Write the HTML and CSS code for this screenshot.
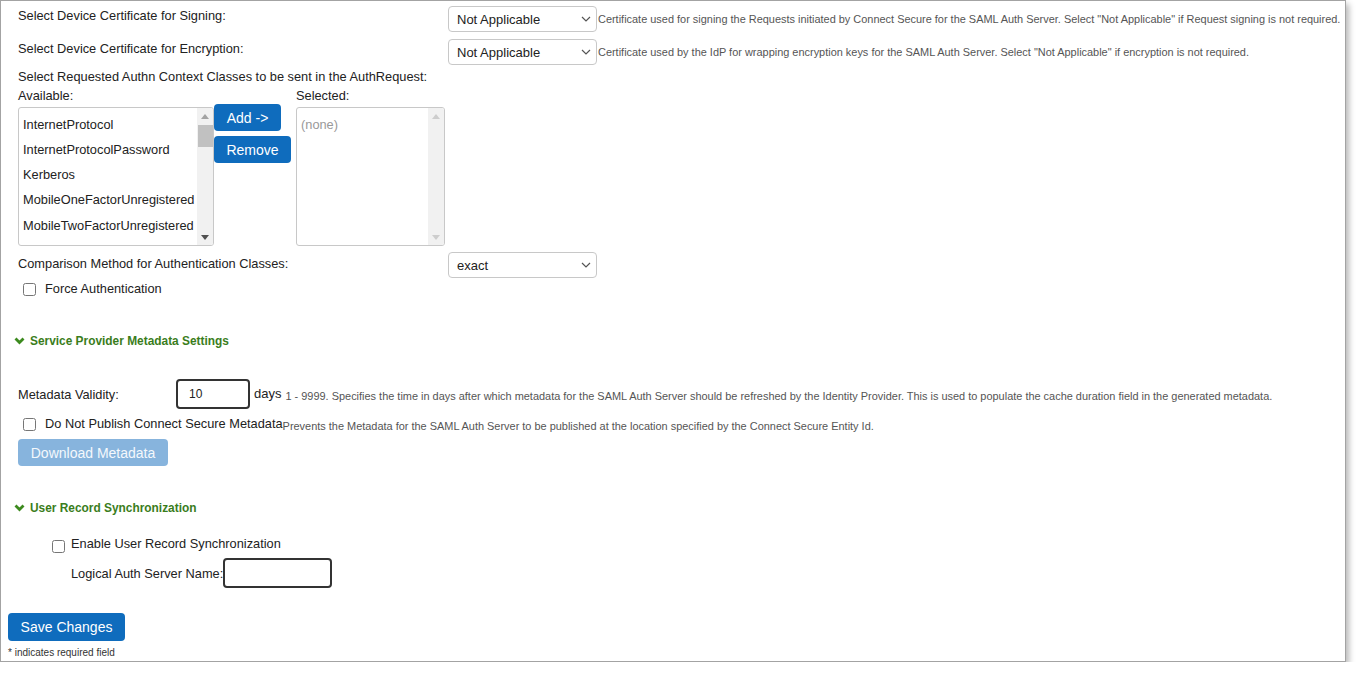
FILE: index.html
```html
<!DOCTYPE html>
<html>
<head>
<meta charset="utf-8">
<link rel="stylesheet" href="styles.css">
</head>
<body>
<div class="frame">
  <div class="content">
    <div class="row r1">
      <div class="label">Select Device Certificate for Signing:</div>
      <div class="field">
        <div class="select"><span>Not Applicable</span><svg width="10" height="6" viewBox="0 0 10 6"><path d="M1 1l4 4 4-4" fill="none" stroke="#555" stroke-width="1.2"/></svg></div>
        <span class="help">Certificate used for signing the Requests initiated by Connect Secure for the SAML Auth Server. Select "Not Applicable" if Request signing is not required.</span>
      </div>
    </div>
    <div class="row r2">
      <div class="label">Select Device Certificate for Encryption:</div>
      <div class="field">
        <div class="select"><span>Not Applicable</span><svg width="10" height="6" viewBox="0 0 10 6"><path d="M1 1l4 4 4-4" fill="none" stroke="#555" stroke-width="1.2"/></svg></div>
        <span class="help">Certificate used by the IdP for wrapping encryption keys for the SAML Auth Server. Select "Not Applicable" if encryption is not required.</span>
      </div>
    </div>
    <div class="plain r3">Select Requested Authn Context Classes to be sent in the AuthRequest:</div>
    <div class="lists">
      <div class="plain">Available:</div>
      <div></div>
      <div class="plain">Selected:</div>
      <div class="listbox">
        <ul class="items">
          <li>InternetProtocol</li>
          <li>InternetProtocolPassword</li>
          <li>Kerberos</li>
          <li>MobileOneFactorUnregistered</li>
          <li>MobileTwoFactorUnregistered</li>
        </ul>
        <div class="sbar">
          <svg class="arr up" width="8" height="5" viewBox="0 0 8 5"><path d="M0 5L4 0L8 5Z" fill="#a3a3a3"/></svg>
          <div class="thumb"></div>
          <svg class="arr down" width="8" height="5" viewBox="0 0 8 5"><path d="M0 0L4 5L8 0Z" fill="#505050"/></svg>
        </div>
      </div>
      <div class="btns">
        <button class="btn">Add -&gt;</button>
        <button class="btn">Remove</button>
      </div>
      <div class="listbox sel">
        <ul class="items"><li class="none">(none)</li></ul>
        <div class="sbar">
          <svg class="arr up" width="8" height="5" viewBox="0 0 8 5"><path d="M0 5L4 0L8 5Z" fill="#cdcdcd"/></svg>
          <div class="spacer"></div>
          <svg class="arr down" width="8" height="5" viewBox="0 0 8 5"><path d="M0 0L4 5L8 0Z" fill="#cdcdcd"/></svg>
        </div>
      </div>
    </div>
    <div class="row r4">
      <div class="label mid">Comparison Method for Authentication Classes:</div>
      <div class="field">
        <div class="select"><span>exact</span><svg width="10" height="6" viewBox="0 0 10 6"><path d="M1 1l4 4 4-4" fill="none" stroke="#555" stroke-width="1.2"/></svg></div>
      </div>
    </div>
    <label class="check r5"><input type="checkbox"><span>Force Authentication</span></label>

    <div class="section s1"><svg width="11" height="8" viewBox="0 0 11 8"><path d="M1.5 1.5l4 4 4-4" fill="none" stroke="#3c8a1e" stroke-width="2.8"/></svg><span>Service Provider Metadata Settings</span></div>

    <div class="meta">
      <div class="mlabel">Metadata Validity:</div>
      <input class="tin small" type="text" value="10">
      <span class="days">days</span>
      <span class="help">1 - 9999. Specifies the time in days after which metadata for the SAML Auth Server should be refreshed by the Identity Provider. This is used to populate the cache duration field in the generated metadata.</span>
    </div>
    <div class="pub">
      <label class="check"><input type="checkbox"><span>Do Not Publish Connect Secure Metadata</span></label>
      <span class="help">Prevents the Metadata for the SAML Auth Server to be published at the location specified by the Connect Secure Entity Id.</span>
    </div>
    <button class="btn dl">Download Metadata</button>

    <div class="section s2"><svg width="11" height="8" viewBox="0 0 11 8"><path d="M1.5 1.5l4 4 4-4" fill="none" stroke="#3c8a1e" stroke-width="2.8"/></svg><span>User Record Synchronization</span></div>

    <div class="sync">
      <label class="check en"><input type="checkbox"><span>Enable User Record Synchronization</span></label>
      <div class="logical"><span>Logical Auth Server Name:</span><input class="tin wide" type="text" value=""></div>
    </div>
  </div>
  <div class="footer">
    <button class="btn save">Save Changes</button>
    <div class="req">* indicates required field</div>
  </div>
</div>
</body>
</html>
```

FILE: styles.css
```css
html, body {
  margin: 0;
  padding: 0;
  background: #ffffff;
}
body {
  font-family: "Liberation Sans", Arial, sans-serif;
  color: #222;
  font-size: 12.8px;
}
.frame {
  box-sizing: border-box;
  width: 1346px;
  height: 662px;
  border: 1px solid #a3a3a3;
  background: #fff;
  box-shadow: 3px 4px 6px rgba(0, 0, 0, 0.28);
  display: flex;
  flex-direction: column;
}
.content {
  padding: 5px 0 0 17px;
}
.row {
  display: flex;
  align-items: flex-start;
}
.label {
  width: 430px;
  line-height: 16px;
  padding-top: 2px;
}
.label.mid {
  padding-top: 4px;
}
.field {
  display: flex;
  align-items: center;
}
.select {
  box-sizing: border-box;
  width: 149px;
  height: 26px;
  border: 1px solid #c8c8c8;
  border-radius: 4px;
  display: flex;
  align-items: center;
  justify-content: space-between;
  padding: 0 5px 0 8px;
  font-size: 13px;
  color: #222;
}
.help {
  font-size: 10.95px;
  color: #555;
  white-space: nowrap;
}
.field .help {
  margin-left: 1px;
}
.r1 { height: 26px; }
.r2 { height: 26px; margin-top: 7px; }
.plain { line-height: 19px; }
.r3 { margin-top: 2px; }
.lists {
  display: grid;
  grid-template-columns: 196px 82px 149px;
  grid-template-rows: 19px 139px;
  row-gap: 2px;
}
.listbox {
  box-sizing: border-box;
  height: 139px;
  border: 1px solid #c8c8c8;
  border-radius: 3px;
  display: flex;
  overflow: hidden;
}
.items {
  list-style: none;
  margin: 0;
  padding: 4px 0 0 4px;
  flex: 1;
  overflow: hidden;
}
.items li {
  line-height: 25px;
  height: 25px;
  white-space: nowrap;
}
.items li:last-child {
  line-height: 27px;
}
.items li.none {
  color: #999;
  line-height: 25px;
}
.sbar {
  width: 16px;
  background: #f1f1f1;
  display: flex;
  flex-direction: column;
  align-items: center;
}
.arr.up { margin-top: 6px; }
.arr.down { margin-top: auto; margin-bottom: 5px; }
.thumb {
  width: 15px;
  height: 22px;
  background: #c1c1c1;
  margin-top: 6px;
}
.btns {
  display: flex;
  flex-direction: column;
  align-items: flex-start;
  gap: 5px;
  margin-top: -3px;
}
.btn {
  font-family: "Liberation Sans", Arial, sans-serif;
  font-size: 14px;
  color: #fff;
  background: #0f6cbd;
  border: none;
  border-radius: 4px;
  height: 27px;
  padding: 0 12px;
  cursor: pointer;
}
.btns .btn:first-child { width: 67px; padding: 0; }
.btns .btn:last-child { width: 77px; padding: 0; }
.r4 { margin-top: 6px; height: 26px; }
.check {
  display: flex;
  align-items: center;
  line-height: 18px;
}
.check input {
  margin: 0;
  width: 13px;
  height: 13px;
}
.check span { margin-left: 9px; }
.r5 { margin-top: 2px; padding-left: 5px; }
.section {
  display: flex;
  align-items: center;
  font-size: 11.9px;
  font-weight: bold;
  color: #3a7d1c;
  line-height: 16px;
  margin-left: -4px;
}
.section span { margin-left: 5px; }
.s1 { margin-top: 35px; }
.meta {
  display: flex;
  align-items: center;
  margin-top: 30px;
  height: 30px;
}
.mlabel { width: 158px; }
.tin {
  box-sizing: border-box;
  height: 30px;
  border: 2px solid #333;
  border-radius: 4px;
  font-family: "Liberation Sans", Arial, sans-serif;
  font-size: 12px;
  color: #222;
  outline: none;
}
.tin.small { width: 74px; padding-left: 11px; }
.days { margin-left: 4px; font-size: 13px; position: relative; top: -1px; }
.meta .help { margin-left: 4px; position: relative; top: 2px; }
.pub {
  display: flex;
  align-items: center;
  margin-top: 6px;
  height: 18px;
}
.pub .check { padding-left: 5px; }
.pub .help { position: relative; top: 2px; }
.btn.dl {
  display: block;
  margin-top: 6px;
  width: 150px;
  height: 27px;
  padding: 0;
  background: #87b4dd;
  color: #f4f8fc;
}
.s2 { margin-top: 34px; }
.sync { padding-left: 34px; margin-top: 19px; }
.check.en { align-items: flex-start; }
.check.en input { margin-top: 5px; }
.check.en span { margin-left: 6px; }
.logical {
  display: flex;
  align-items: center;
  margin-top: 5px;
  padding-left: 19px;
}
.tin.wide { width: 109px; }
.footer {
  padding-left: 7px;
  margin-top: 25px;
}
.btn.save {
  display: block;
  width: 117px;
  height: 28px;
  padding: 0;
}
.req {
  font-size: 10px;
  color: #333;
  margin-top: 6px;
  line-height: 12px;
}
```
